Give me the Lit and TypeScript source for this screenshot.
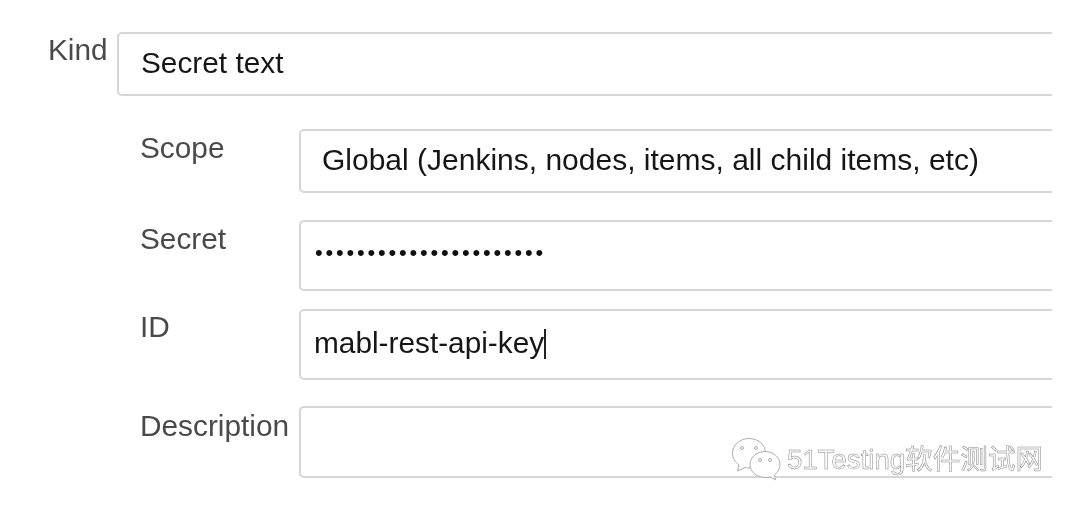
import { LitElement, html, css } from 'lit';
import { customElement } from 'lit/decorators.js';

@customElement('app-root')
export class AppRoot extends LitElement {
  static styles = css`
    :host {
      display: block;
      position: relative;
      width: 1080px;
      height: 511px;
      overflow: hidden;
      background: #fff;
      font-family: 'Liberation Sans', Arial, sans-serif;
    }
    .form {
      width: 1052px;
      height: 511px;
      overflow: hidden;
      box-sizing: border-box;
      padding-top: 32px;
      filter: blur(0.5px);
    }
    .row {
      display: flex;
      align-items: flex-start;
    }
    .kind {
      padding-left: 48px;
      margin-bottom: 33px;
    }
    .sub {
      padding-left: 140px;
    }
    .label {
      flex: none;
      font-size: 29.8px;
      line-height: 36px;
      color: #4a4a4a;
    }
    .kind .label {
      width: 69px;
    }
    .sub .label {
      width: 159px;
      padding-top: 1px;
    }
    .box {
      flex: none;
      width: 1000px;
      box-sizing: border-box;
      border: 2px solid #d6d6d6;
      border-radius: 5px;
      font-size: 29.8px;
      color: #161616;
      white-space: nowrap;
    }
    .kind .box {
      height: 64px;
      padding: 11px 0 0 22px;
      line-height: 36px;
    }
    .scope {
      margin-bottom: 27px;
    }
    .scope .box {
      height: 64px;
      padding: 11px 0 0 21px;
      line-height: 36px;
      font-size: 30px;
    }
    .secret {
      margin-bottom: 18px;
    }
    .secret .box {
      height: 71px;
      padding: 10px 0 0 14px;
      line-height: 36px;
    }
    .dots {
      font-size: 22px;
      letter-spacing: 2.8px;
      color: #111;
    }
    .id {
      margin-bottom: 26px;
    }
    .id .label {
      padding-top: 0;
    }
    .id .box {
      height: 71px;
      padding: 14px 0 0 13px;
      line-height: 36px;
    }
    .caret {
      display: inline-block;
      width: 2px;
      height: 30px;
      background: #222;
      vertical-align: -6px;
    }
    .description .label {
      padding-top: 2px;
    }
    .description .box {
      height: 72px;
    }
    .watermark {
      position: absolute;
      left: 731px;
      top: 437px;
      display: flex;
      align-items: flex-start;
      gap: 6px;
      filter: grayscale(1);
    }
    .watermark svg {
      display: block;
      flex: none;
    }
    .mark-text {
      font-size: 27.6px;
      line-height: 44px;
      padding-top: 1px;
      white-space: nowrap;
      color: #fff;
      font-family: 'Liberation Sans', 'Noto Sans CJK SC', sans-serif;
      -webkit-text-stroke: 0.5px #858585;
    }
  `;

  render() {
    return html`
      <div class="form">
        <div class="row kind">
          <div class="label">Kind</div>
          <div class="box">Secret text</div>
        </div>
        <div class="row sub scope">
          <div class="label">Scope</div>
          <div class="box">Global (Jenkins, nodes, items, all child items, etc)</div>
        </div>
        <div class="row sub secret">
          <div class="label">Secret</div>
          <div class="box"><span class="dots">••••••••••••••••••••••</span></div>
        </div>
        <div class="row sub id">
          <div class="label">ID</div>
          <div class="box">mabl-rest-api-key<span class="caret"></span></div>
        </div>
        <div class="row sub description">
          <div class="label">Description</div>
          <div class="box"></div>
        </div>
      </div>
      <div class="watermark">
        <svg width="50" height="44" viewBox="0 0 50 44" fill="#fff" stroke="#ababab" stroke-width="1">
          <path d="M18 1.500C9 1.500 1.500 8 1.500 16c0 5 2.500 9 6.500 12l-1.500 6 7.500-3.500c1.500.4 3 .6 4.500.6 9 0 16-6.500 16-15S27 1.500 18 1.500z" />
          <circle cx="11" cy="11" r="1.500" />
          <circle cx="25" cy="11" r="1.500" />
          <path d="M34 14.500c-8 0-15 5.500-15 13s7 13 15 13c2 0 3.500-.3 5-.7l5.500 3-1-5c3-2.300 5.500-6 5.500-10.300 0-7.500-7-13-15-13z" />
          <circle cx="29" cy="23" r="1.500" />
          <circle cx="39" cy="23" r="1.500" />
        </svg>
        <div class="mark-text">51Testing软件测试网</div>
      </div>
    `;
  }
}
